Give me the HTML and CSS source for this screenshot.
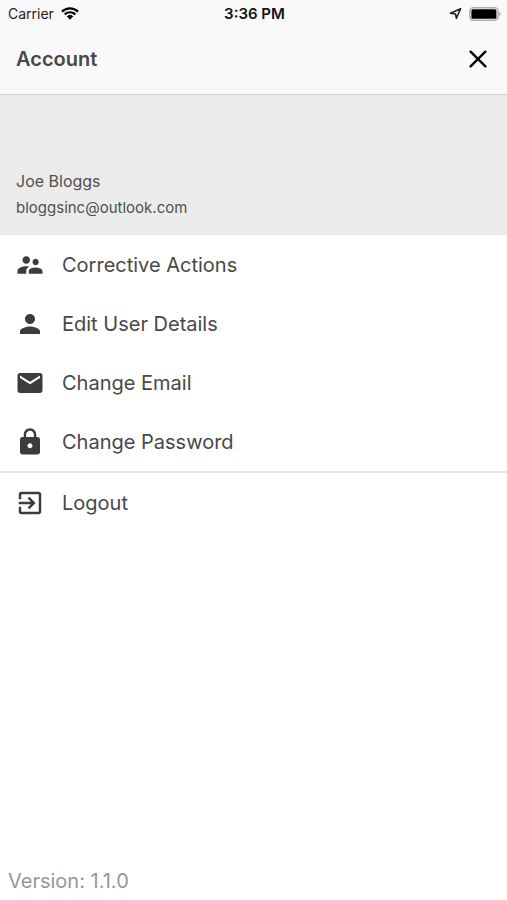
FILE: index.html
```
<!DOCTYPE html>
<html lang="en">

<head>
    <meta charset="UTF-8">
    <meta name="viewport" content="width=device-width, initial-scale=1.0">
    <title>Account</title>
    <link rel="stylesheet" href="styles.css">
</head>

<body>
    <header>
        <div class="status-bar">
            <div class="status-left">
                <span>Carrier</span>
                <svg class="wifi" viewBox="0 0 18 13" aria-hidden="true">
                    <path d="M1 4.6a11.5 11.5 0 0 1 16 0M3.7 7.4a7.6 7.6 0 0 1 10.6 0" fill="none" stroke="#000" stroke-width="2.2"/>
                    <path d="M5.7 9.3a4.8 4.8 0 0 1 6.6 0L9 12.7z"/>
                </svg>
            </div>
            <span class="time">3:36 PM</span>
            <div class="status-right">
                <svg class="location" viewBox="0 0 13 13" aria-hidden="true">
                    <path d="M1.4 6.2L11.6 1.8L7.4 11.3L6.5 7z" fill="none" stroke="#222" stroke-width="1.6" stroke-linejoin="round"/>
                </svg>
                <svg class="battery" viewBox="0 0 32 14" aria-hidden="true">
                    <rect x="0.8" y="0.8" width="28.4" height="12.4" rx="3.6" fill="none" stroke="#b0b0b0" stroke-width="1.6"/>
                    <rect x="2.4" y="2.2" width="25" height="9.6" rx="1.6"/>
                    <path d="M30.4 5v4c1.6-.6 1.6-3.4 0-4z" fill="#999"/>
                </svg>
            </div>
        </div>
        <div class="title-bar">
            <h1>Account</h1>
            <button class="close" type="button" aria-label="Close">
                <svg viewBox="0 0 18 18" aria-hidden="true">
                    <path d="M1.6 1.6l14.8 14.8M16.4 1.6L1.6 16.4" stroke="#000" stroke-width="2.3" stroke-linecap="round"/>
                </svg>
            </button>
        </div>
    </header>

    <section class="profile">
        <p class="name">Joe Bloggs</p>
        <p class="email">bloggsinc@outlook.com</p>
    </section>

    <nav>
        <ul class="menu">
            <li>
                <a href="#actions">
                    <svg viewBox="0 0 24 24" aria-hidden="true"><path d="M16.5 12c1.38 0 2.49-1.12 2.49-2.5S17.88 7 16.5 7C15.12 7 14 8.12 14 9.5s1.12 2.5 2.5 2.5zM9 11c1.66 0 2.99-1.34 2.99-3S10.66 5 9 5C7.34 5 6 6.34 6 8s1.34 3 3 3zm7.5 3c-1.83 0-5.5.92-5.5 2.75V19h11v-2.25c0-1.83-3.67-2.75-5.5-2.75zM9 13c-2.33 0-7 1.17-7 3.5V19h7v-2.25c0-.85.33-2.34 2.37-3.47C10.5 13.1 9.66 13 9 13z"/></svg>
                    <span>Corrective Actions</span>
                </a>
            </li>
            <li>
                <a href="#details">
                    <svg viewBox="0 0 24 24" aria-hidden="true"><path d="M12 12c2.21 0 4-1.79 4-4s-1.79-4-4-4-4 1.79-4 4 1.79 4 4 4zm0 2c-2.67 0-8 1.34-8 4v2h16v-2c0-2.66-5.33-4-8-4z"/></svg>
                    <span>Edit User Details</span>
                </a>
            </li>
            <li>
                <a href="#email">
                    <svg viewBox="0 0 24 24" aria-hidden="true"><path d="M20 4H4c-1.1 0-1.99.9-1.99 2L2 18c0 1.1.9 2 2 2h16c1.1 0 2-.9 2-2V6c0-1.1-.9-2-2-2zm0 4l-8 5-8-5V6l8 5 8-5v2z"/></svg>
                    <span>Change Email</span>
                </a>
            </li>
            <li>
                <a href="#password">
                    <svg viewBox="0 0 24 24" aria-hidden="true"><path d="M18 8h-1V6c0-2.76-2.24-5-5-5S7 3.24 7 6v2H6c-1.1 0-2 .9-2 2v10c0 1.1.9 2 2 2h12c1.1 0 2-.9 2-2V10c0-1.1-.9-2-2-2zm-6 9c-1.1 0-2-.9-2-2s.9-2 2-2 2 .9 2 2-.9 2-2 2zm3.1-9H8.9V6c0-1.71 1.39-3.1 3.1-3.1 1.71 0 3.1 1.39 3.1 3.1v2z"/></svg>
                    <span>Change Password</span>
                </a>
            </li>
            <li class="logout">
                <a href="#logout">
                    <svg viewBox="0 0 24 24" aria-hidden="true"><path d="M10.09 15.59L11.5 17l5-5-5-5-1.41 1.41L12.67 11H3v2h9.67l-2.58 2.59zM19 3H5c-1.11 0-2 .9-2 2v4h2V5h14v14H5v-4H3v4c0 1.1.89 2 2 2h14c1.1 0 2-.9 2-2V5c0-1.1-.9-2-2-2z"/></svg>
                    <span>Logout</span>
                </a>
            </li>
        </ul>
    </nav>

    <footer>Version: 1.1.0</footer>
</body>

</html>
```

FILE: styles.css
```
* {
    margin: 0;
    padding: 0;
    box-sizing: border-box;
}

body {
    display: flex;
    flex-direction: column;
    min-height: 100vh;
    background-color: #fff;
    font-family: Inter, "Liberation Sans", sans-serif;
    color: #505050;
}

svg {
    display: block;
    flex: none;
}

header {
    background-color: #f9f9f9;
    border-bottom: 1px solid #d2d2d2;
}

.status-bar {
    display: grid;
    grid-template-columns: 1fr auto 1fr;
    align-items: center;
    height: 27px;
    padding: 0 6px 0 8px;
    font-size: 14px;
    color: #222;
}

.status-left,
.status-right {
    display: flex;
    align-items: center;
    gap: 7px;
}

.status-right {
    justify-content: flex-end;
}

.time {
    font-size: 15px;
    font-weight: 600;
    color: #111;
}

.wifi {
    width: 18px;
    height: 13px;
}

.location {
    width: 13px;
    height: 13px;
}

.battery {
    width: 32px;
    height: 14px;
}

.title-bar {
    display: flex;
    align-items: center;
    justify-content: space-between;
    height: 67px;
    padding: 0 16px 3px;
}

h1 {
    font-size: 20px;
    font-weight: 600;
    color: #484848;
}

.close {
    padding: 4px;
    border: none;
    background: none;
    cursor: pointer;
}

.close svg {
    width: 18px;
    height: 18px;
}

.profile {
    padding: 75px 16px 16px;
    background-color: #ebebeb;
}

.name {
    font-size: 16px;
    line-height: 22px;
    margin-bottom: 5px;
}

.email {
    font-size: 15px;
    line-height: 22px;
}

.menu {
    list-style: none;
}

.menu a {
    display: flex;
    align-items: center;
    gap: 17px;
    height: 59px;
    padding: 0 15px;
    font-size: 20px;
    color: #484848;
    text-decoration: none;
}

.menu svg {
    width: 30px;
    height: 30px;
    fill: #3c3c3c;
}

.logout {
    border-top: 2px solid #e4e4e4;
}

footer {
    margin-top: auto;
    padding: 0 8px 7px;
    font-size: 20px;
    line-height: 24px;
    color: #979797;
}
```
